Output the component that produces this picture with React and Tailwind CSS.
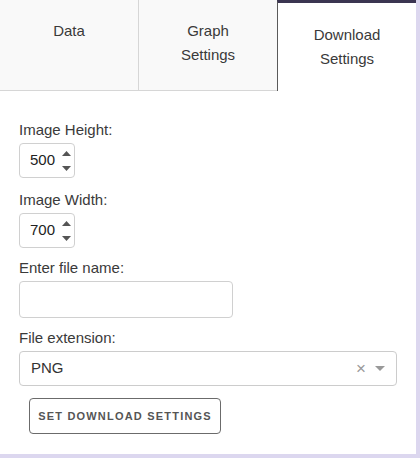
import React from 'react';

const font = { fontFamily: '"Liberation Sans", Arial, sans-serif' };

function Spinner() {
  return (
    <span className="flex flex-col items-center gap-[10px] ml-[7px]">
      <svg width="9" height="5" viewBox="0 0 9 5"><path d="M4.5 0 L9 5 L0 5 Z" fill="#555" /></svg>
      <svg width="9" height="5" viewBox="0 0 9 5"><path d="M0 0 L9 0 L4.5 5 Z" fill="#555" /></svg>
    </span>
  );
}

function NumberBox({ value }) {
  return (
    <div className="mt-[3px] w-[56px] h-[35px] border border-[#d0d0d0] rounded-[4px] flex items-center pl-[10px] text-[15px] text-[#222] bg-white">
      <span>{value}</span>
      <Spinner />
    </div>
  );
}

function Label({ children }) {
  return <div className="h-[20px] leading-[20px] text-[15px] text-[#3a3a3a]">{children}</div>;
}

export default function App() {
  return (
    <div className="w-[420px] h-[458px] bg-[#dcd7ef]" style={font}>
      <div className="w-[416px] h-[454px] bg-white flex flex-col">
        {/* tabs */}
        <div className="flex h-[91px]">
          <div className="flex-1 bg-[#f9f9f9] border-b border-r border-[#d6d6d6] text-center text-[15px] leading-[24px] text-[#3a3a3a] pt-[19px]">
            Data
          </div>
          <div className="flex-1 bg-[#f9f9f9] border-b border-[#d6d6d6] text-center text-[15px] leading-[24px] text-[#3a3a3a] pt-[19px]">
            Graph<br />Settings
          </div>
          <div className="flex-1 bg-white border-t-[3px] border-t-[#3b3551] border-l border-l-[#5a5a5a] text-center text-[15px] leading-[24px] text-[#3a3a3a] pt-[20px]">
            Download<br />Settings
          </div>
        </div>

        {/* form */}
        <div className="pl-[19px] pr-[20px] pt-[29px]">
          <Label>Image Height:</Label>
          <NumberBox value="500" />

          <div className="mt-[12px]"><Label>Image Width:</Label></div>
          <NumberBox value="700" />

          <div className="mt-[10px]"><Label>Enter file name:</Label></div>
          <div className="mt-[3px] w-[214px] h-[37px] border border-[#d0d0d0] rounded-[4px] bg-white" />

          <div className="mt-[10px]"><Label>File extension:</Label></div>
          <div className="mt-[3px] w-[378px] h-[35px] border border-[#ccc] rounded-[4px] flex items-center pl-[11px] pr-[11px] text-[15px] text-[#333]">
            <span className="flex-1">PNG</span>
            <span className="text-[#999] text-[17px] leading-none mr-[9px]">×</span>
            <svg width="10" height="5" viewBox="0 0 10 5"><path d="M0 0 L10 0 L5 5 Z" fill="#999" /></svg>
          </div>

          <button className="block mt-[12px] ml-[10px] w-[192px] h-[36px] border border-[#6b6b6b] rounded-[4px] bg-white text-[11px] font-bold tracking-[1.2px] text-[#555] uppercase">
            Set Download Settings
          </button>
        </div>
      </div>
    </div>
  );
}
